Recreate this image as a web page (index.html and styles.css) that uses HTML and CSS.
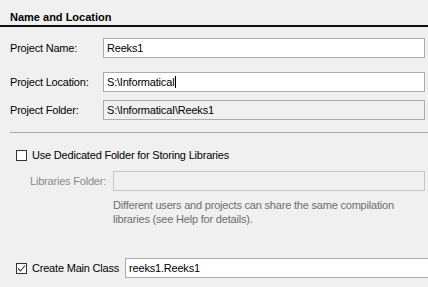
FILE: index.html
```html
<!DOCTYPE html>
<html lang="en">
<head>
  <meta charset="UTF-8">
  <title>Name and Location</title>
  <link rel="stylesheet" href="styles.css">
</head>
<body>
  <div class="panel">
    <div class="title">Name and Location</div>

    <div class="row row-name">
      <label>Project Name:</label>
      <div class="field">Reeks1</div>
    </div>

    <div class="row row-loc">
      <label>Project Location:</label>
      <div class="field">S:\InformaticaI<span class="caret"></span></div>
    </div>

    <div class="row row-folder">
      <label>Project Folder:</label>
      <div class="field field-ro">S:\InformaticaI\Reeks1</div>
    </div>

    <hr class="sep">

    <div class="check-row">
      <span class="box"></span>
      <span>Use Dedicated Folder for Storing Libraries</span>
    </div>

    <div class="row row-lib">
      <label>Libraries Folder:</label>
      <div class="field field-off"></div>
    </div>

    <p class="help">Different users and projects can share the same compilation<br>libraries (see Help for details).</p>

    <div class="main-row">
      <span class="box">
        <svg width="9" height="9" viewBox="0 0 9 9"><path d="M1 4.5 L3.5 7 L8 1.5" fill="none" stroke="#333" stroke-width="1.1"/></svg>
      </span>
      <span>Create Main Class</span>
      <div class="field">reeks1.Reeks1</div>
    </div>
  </div>
</body>
</html>
```

FILE: styles.css
```css
body {
  margin: 0;
  background: #f0f0f0;
  font-family: 'Liberation Sans', Arial, sans-serif;
  font-size: 11px;
  letter-spacing: -0.2px;
  color: #000;
  overflow: hidden;
}
.panel {
  width: 428px;
}
.title {
  padding: 10px 0 1px 10px;
  line-height: 14px;
  font-weight: 700;
  letter-spacing: 0;
  border-bottom: 2px solid #111;
}
.row {
  display: grid;
  grid-template-columns: 93px 1fr;
  align-items: center;
  padding: 0 3px 0 10px;
}
.row label {
  line-height: 14px;
}
.row-name {
  margin-top: 11px;
}
.row-loc {
  margin-top: 14px;
}
.row-folder {
  margin-top: 8px;
}
.field {
  box-sizing: border-box;
  height: 20px;
  line-height: 18px;
  padding: 0 3px;
  background: #fff;
  border: 1px solid #ababab;
  white-space: nowrap;
}
.field-ro {
  background: #f0f0f0;
  border-color: #adadad;
}
.field-off {
  background: #f0f0f0;
  border-color: #c6c6c6;
}
.caret {
  display: inline-block;
  width: 0;
  height: 12px;
  border-left: 1px solid #000;
  vertical-align: -2px;
}
.sep {
  margin: 12px 0 0 10px;
  height: 0;
  border: 0;
  border-top: 1px solid #a9a9a9;
}
.check-row, .main-row {
  display: flex;
  align-items: center;
  gap: 5px;
  padding-left: 16px;
}
.check-row {
  margin-top: 16px;
}
.box {
  box-sizing: border-box;
  display: flex;
  align-items: center;
  justify-content: center;
  width: 11px;
  height: 11px;
  background: #fff;
  border: 1px solid #333;
}
.row-lib {
  grid-template-columns: 83px 1fr;
  padding-left: 30px;
  margin-top: 10px;
}
.row-lib label {
  color: #8a8a8a;
}
.help {
  margin: 7px 0 0 113px;
  line-height: 14px;
  color: #6d6d6d;
}
.main-row {
  margin-top: 32px;
}
.main-row .field {
  flex: 1;
  margin-left: 1px;
  margin-right: -1px;
}
```
